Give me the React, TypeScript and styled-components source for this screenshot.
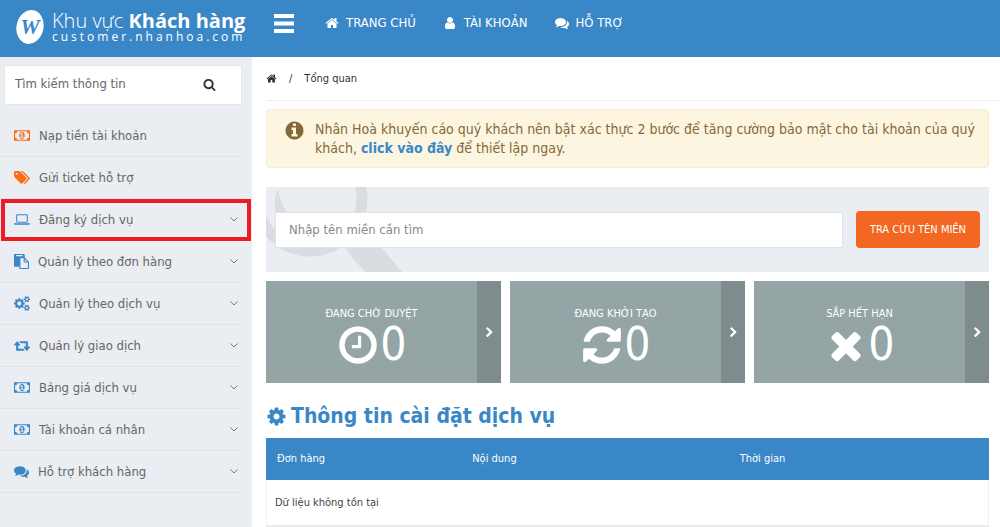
import React from 'react';
import styled, { createGlobalStyle, css } from 'styled-components';

const blue = '#3a87c8';
const orange = '#ff6a13';
const panel = '#eaedf1';

const GlobalStyle = createGlobalStyle`
  *, *::before, *::after { box-sizing: border-box; }
  body {
    margin: 0;
    background: #fff;
    color: #444;
    font-family: Tahoma, "DejaVu Sans Condensed", "Noto Sans", sans-serif;
    font-size: 13px;
    line-height: 20px;
  }
  a { color: inherit; text-decoration: none; }
  ul { list-style: none; margin: 0; padding: 0; }
  input, button { font: inherit; }
`;

/* Icon outlines on a 1792-unit grid */
const paths = {
  home: 'M1472 992v480q0 26-19 45t-45 19h-384v-384h-256v384h-384q-26 0-45-19t-19-45v-480q0-1 .5-3t.5-3l575-474 575 474q1 2 1 6zm223-69l-62 74q-8 9-21 11h-3q-13 0-21-7l-692-577-692 577q-12 8-24 7-13-2-21-11l-62-74q-8-10-7-23.5t11-21.5l719-599q32-26 76-26t76 26l244 204v-195q0-14 9-23t23-9h192q14 0 23 9t9 23v408l219 182q10 8 11 21.5t-7 23.5z',
  user: 'M1536 1399q0 109-62.5 187t-150.5 78h-854q-88 0-150.5-78t-62.5-187q0-85 8.5-160.5t31.5-152 58.5-131 94-89 134.5-34.5q131 128 313 128t313-128q76 0 134.5 34.5t94 89 58.5 131 31.5 152 8.5 160.5zm-256-887q0 159-112.5 271.5t-271.5 112.5-271.5-112.5-112.5-271.5 112.5-271.5 271.5-112.5 271.5 112.5 112.5 271.5z',
  comments: 'M1408 768q0 139-94 257t-256.5 186.5-353.5 68.5q-86 0-176-16-124 88-278 128-36 9-86 16h-3q-11 0-20.5-8t-11.5-21q-1-3-1-6.5t.5-6.5 2-6l2.5-5 3.5-5.5 4-5 4.5-5 4-4.5q5-6 23-25t26-29.5 22.5-29 25-38.5 20.5-44q-124-72-195-177t-71-224q0-139 94-257t256.5-186.5 353.5-68.5 353.5 68.5 256.5 186.5 94 257zm384 256q0 120-71 224.5t-195 176.5q10 24 20.5 44t25 38.5 22.5 29 26 29.5 23 25q1 1 4 4.5t4.5 5 4 5 3.5 5.5l2.5 5 2 6 .5 6.5-1 6.5q-3 14-13 22t-22 7q-50-7-86-16-154-40-278-128-90 16-176 16-271 0-472-132 58 4 88 4 161 0 309-45t264-129q125-92 192-212t67-254q0-77-23-152 129 71 204 178t75 230z',
  search: 'M1216 832q0-185-131.5-316.5t-316.5-131.5-316.5 131.5-131.5 316.5 131.5 316.5 316.5 131.5 316.5-131.5 131.5-316.5zm512 832q0 52-38 90t-90 38q-54 0-90-38l-343-342q-179 124-399 124-143 0-273.5-55.5t-225-150-150-225-55.5-273.5 55.5-273.5 150-225 225-150 273.5-55.5 273.5 55.5 225 150 150 225 55.5 273.5q0 220-124 399l343 343q37 37 37 90z',
  money: 'M768 1152h384v-96h-128v-448h-114l-148 137 77 80q42-37 55-57h2v288h-128v96zm512-256q0 70-21 142t-59.5 134-101.5 101-138 39-138-39-101.5-101-59.5-134-21-142 21-142 59.5-134 101.5-101 138-39 138 39 101.5 101 59.5 134 21 142zm512 256v-512q-106 0-181-75t-75-181h-1152q0 106-75 181t-181 75v512q106 0 181 75t75 181h1152q0-106 75-181t181-75zm128-832v1152q0 26-19 45t-45 19h-1792q-26 0-45-19t-19-45v-1152q0-26 19-45t45-19h1792q26 0 45 19t19 45z',
  tags: 'M448 448q0-53-37.5-90.5t-90.5-37.5-90.5 37.5-37.5 90.5 37.5 90.5 90.5 37.5 90.5-37.5 37.5-90.5zm1067 576q0 53-37 90l-491 492q-39 37-91 37-53 0-90-37l-715-716q-38-37-64.5-101t-26.5-117v-416q0-52 38-90t90-38h416q53 0 117 26.5t102 64.5l715 714q37 39 37 91zm384 0q0 53-37 90l-491 492q-39 37-91 37-36 0-59-14t-53-45l470-470q37-37 37-90 0-52-37-91l-715-714q-38-38-102-64.5t-117-26.5h224q53 0 117 26.5t102 64.5l715 714q37 39 37 91z',
  laptop: 'M416 1280q-66 0-113-47t-47-113v-704q0-66 47-113t113-47h1088q66 0 113 47t47 113v704q0 66-47 113t-113 47h-1088zm-32-864v704q0 13 9.5 22.5t22.5 9.5h1088q13 0 22.5-9.5t9.5-22.5v-704q0-13-9.5-22.5t-22.5-9.5h-1088q-13 0-22.5 9.5t-9.5 22.5zm1376 928h160v96q0 40-47 68t-113 28h-1600q-66 0-113-28t-47-68v-96h1760zm-720 96q16 0 16-16t-16-16h-160q-16 0-16 16t16 16h160z',
  paste: 'M768 1664h896v-640h-416q-40 0-68-28t-28-68v-416h-384v1152zm256-1440v-64q0-13-9.5-22.5t-22.5-9.5h-704q-13 0-22.5 9.5t-9.5 22.5v64q0 13 9.5 22.5t22.5 9.5h704q13 0 22.5-9.5t9.5-22.5zm256 672h299l-299-299v299zm512 128v672q0 40-28 68t-68 28h-960q-40 0-68-28t-28-68v-160h-544q-40 0-68-28t-28-68v-1344q0-40 28-68t68-28h1088q40 0 68 28t28 68v328q21 13 36 28l408 408q28 28 48 76t20 88z',
  cogs: 'M896 896q0-106-75-181t-181-75-181 75-75 181 75 181 181 75 181-75 75-181zm768 512q0-52-38-90t-90-38-90 38-38 90q0 53 37.5 90.5t90.5 37.5 90.5-37.5 37.5-90.5zm0-1024q0-52-38-90t-90-38-90 38-38 90q0 53 37.5 90.5t90.5 37.5 90.5-37.5 37.5-90.5zm-384 421v185q0 10-7 19.5t-16 10.5l-155 24q-11 35-32 76 34 48 90 115 7 11 7 20 0 12-7 19-23 30-82.5 89.5t-78.5 59.5q-11 0-21-7l-115-90q-37 19-77 31-11 108-23 155-7 24-30 24h-186q-11 0-20-7.5t-10-17.5l-23-153q-34-10-75-31l-118 89q-7 7-20 7-11 0-21-8-144-133-144-160 0-9 7-19 10-14 41-53t47-61q-23-44-35-82l-152-24q-10-1-17-9.5t-7-19.5v-185q0-10 7-19.5t16-10.5l155-24q11-35 32-76-34-48-90-115-7-11-7-20 0-12 7-20 22-30 82-89t79-59q11 0 21 7l115 90q34-18 77-32 11-108 23-154 7-24 30-24h186q11 0 20 7.5t10 17.5l23 153q34 10 75 31l118-89q8-7 20-7 11 0 21 8 144 133 144 160 0 8-7 19-12 16-42 54t-45 60q23 48 34 82l152 23q10 2 17 10.5t7 19.5zm640 533v140q0 16-149 31-12 27-30 52 51 113 51 138 0 4-4 7-122 71-124 71-8 0-46-47t-52-68q-20 2-30 2t-30-2q-14 21-52 68t-46 47q-2 0-124-71-4-3-4-7 0-25 51-138-18-25-30-52-149-15-149-31v-140q0-16 149-31 13-29 30-52-51-113-51-138 0-4 4-7 4-2 35-20t59-34 30-16q8 0 46 46.5t52 67.5q20-2 30-2t30 2q51-71 92-112l6-2q4 0 124 70 4 3 4 7 0 25-51 138 17 23 30 52 149 15 149 31zm0-1024v140q0 16-149 31-12 27-30 52 51 113 51 138 0 4-4 7-122 71-124 71-8 0-46-47t-52-68q-20 2-30 2t-30-2q-14 21-52 68t-46 47q-2 0-124-71-4-3-4-7 0-25 51-138-18-25-30-52-149-15-149-31v-140q0-16 149-31 13-29 30-52-51-113-51-138 0-4 4-7 4-2 35-20t59-34 30-16q8 0 46 46.5t52 67.5q20-2 30-2t30 2q51-71 92-112l6-2q4 0 124 70 4 3 4 7 0 25-51 138 17 23 30 52 149 15 149 31z',
  retweet: 'M1280 1504q0 13-9.5 22.5t-22.5 9.5h-960q-8 0-13.5-2t-9-7-5.5-8-3-11.5-1-11.5v-600h-192q-26 0-45-19t-19-45q0-24 15-41l320-384q19-22 49-22t49 22l320 384q15 17 15 41 0 26-19 45t-45 19h-192v384h576q16 0 25 11l160 192q7 10 7 21zm640-416q0 24-15 41l-320 384q-20 23-49 23t-49-23l-320-384q-15-17-15-41 0-26 19-45t45-19h192v-384h-576q-16 0-25-12l-160-192q-7-9-7-20 0-13 9.5-22.5t22.5-9.5h960q8 0 13.5 2t9 7 5.5 8 3 11.5 1 11.5v600h192q26 0 45 19t19 45z',
  info: 'M1152 1376v-160q0-14-9-23t-23-9h-96v-512q0-14-9-23t-23-9h-320q-14 0-23 9t-9 23v160q0 14 9 23t23 9h96v320h-96q-14 0-23 9t-9 23v160q0 14 9 23t23 9h448q14 0 23-9t9-23zm-128-896v-160q0-14-9-23t-23-9h-192q-14 0-23 9t-9 23v160q0 14 9 23t23 9h192q14 0 23-9t9-23zm640 416q0 209-103 385.5t-279.5 279.5-385.5 103-385.5-103-279.5-279.5-103-385.5 103-385.5 279.5-279.5 385.5-103 385.5 103 279.5 279.5 103 385.5z',
  clock: 'M1024 544v448q0 14-9 23t-23 9h-320q-14 0-23-9t-9-23v-64q0-14 9-23t23-9h224v-352q0-14 9-23t23-9h64q14 0 23 9t9 23zm416 352q0-148-73-273t-198-198-273-73-273 73-198 198-73 273 73 273 198 198 273 73 273-73 198-198 73-273zm224 0q0 209-103 385.5t-279.5 279.5-385.5 103-385.5-103-279.5-279.5-103-385.5 103-385.5 279.5-279.5 385.5-103 385.5 103 279.5 279.5 103 385.5z',
  refresh: 'M1639 1056q0 5-1 7-64 268-268 434.5t-478 166.5q-146 0-282.5-55t-243.5-157l-129 129q-19 19-45 19t-45-19-19-45v-448q0-26 19-45t45-19h448q26 0 45 19t19 45-19 45l-137 137q71 66 161 102t187 36q134 0 250-65t186-179q11-17 53-117 8-23 30-23h192q13 0 22.5 9.5t9.5 22.5zm25-800v448q0 26-19 45t-45 19h-448q-26 0-45-19t-19-45 19-45l138-138q-148-137-349-137-134 0-250 65t-186 179q-11 17-53 117-8 23-30 23h-199q-13 0-22.5-9.5t-9.5-22.5v-7q65-268 270-434.5t480-166.5q146 0 284 55.5t245 156.5l130-129q19-19 45-19t45 19 19 45z',
  times: 'M1490 1322q0 40-28 68l-136 136q-28 28-68 28t-68-28l-294-294-294 294q-28 28-68 28t-68-28l-136-136q-28-28-28-68t28-68l294-294-294-294q-28-28-28-68t28-68l136-136q28-28 68-28t68 28l294 294 294-294q28-28 68-28t68 28l136 136q28 28 28 68t-28 68l-294 294 294 294q28 28 28 68z',
  cog: 'M1152 896q0-106-75-181t-181-75-181 75-75 181 75 181 181 75 181-75 75-181zm512-109v222q0 12-8 23t-20 13l-185 28q-19 54-39 91 35 50 107 138 10 12 10 25t-9 23q-27 37-99 108t-94 71q-12 0-26-9l-138-108q-44 23-91 38-16 136-29 186-7 28-36 28h-222q-14 0-24.5-8.5t-11.5-21.5l-28-184q-49-16-90-37l-141 107q-10 9-25 9-14 0-25-11-126-114-165-168-7-10-7-23 0-12 8-23 15-21 51-66.5t54-70.5q-27-50-41-99l-183-27q-13-2-21-12.5t-8-23.5v-222q0-12 8-23t19-13l186-28q14-46 39-92-40-57-107-138-10-12-10-24 0-10 9-23 26-36 98.5-107.5t94.5-71.5q13 0 26 10l138 107q44-23 91-38 16-136 29-186 7-28 36-28h222q14 0 24.5 8.5t11.5 21.5l28 184q49 16 90 37l142-107q9-9 24-9 13 0 25 10 129 119 165 170 7 8 7 22 0 12-8 23-15 21-51 66.5t-54 70.5q26 50 41 98l183 28q13 2 21 12.5t8 23.5z',
  chevron: 'M1363 877l-742 742q-19 19-45 19t-45-19l-166-166q-19-19-19-45t19-45l531-531-531-531q-19-19-19-45t19-45l166-166q19-19 45-19t45 19l742 742q19 19 19 45t-19 45z',
};
type IconName = keyof typeof paths;

const Svg = styled.svg`
  display: block;
  flex: none;
  fill: currentColor;
`;

function Icon({ name, size, wide = false }: { name: IconName; size: number; wide?: boolean }) {
  return (
    <Svg
      height={size}
      width={wide ? Math.round((size * 15) / 14) : size}
      viewBox={wide ? '0 0 1920 1792' : '0 0 1792 1792'}
      aria-hidden="true"
    >
      <path d={paths[name]} />
    </Svg>
  );
}

const Header = styled.header`
  display: flex;
  align-items: flex-start;
  height: 57px;
  background: ${blue};
  color: #fff;
`;

const Brand = styled.a`
  display: flex;
  flex: none;
  gap: 7px;
  width: 252px;
  padding: 10px 0 0 16px;
`;

const BrandText = styled.span`
  display: flex;
  flex-direction: column;
  font-family: "Open Sans", sans-serif;
  white-space: nowrap;
`;

const BrandName = styled.span`
  font-size: 20px;
  line-height: 22px;
  font-weight: 300;
  b { font-weight: 700; }
`;

const BrandHost = styled.span`
  font-size: 12px;
  line-height: 10px;
  letter-spacing: 3px;
`;

const MenuButton = styled.button`
  display: flex;
  flex: none;
  margin: 14px 0 0 22px;
  padding: 0;
  border: 0;
  background: none;
  color: inherit;
`;

const TopNav = styled.nav`
  display: flex;
  gap: 27px;
  margin: 13px 0 0 31px;
  font-size: 13px;
`;

const TopLink = styled.a`
  display: flex;
  align-items: center;
  gap: 7px;
`;

const Body = styled.div`
  display: flex;
  align-items: stretch;
  min-height: calc(100vh - 57px);
`;

const Sidebar = styled.aside`
  flex: none;
  width: 252px;
  background: ${panel};
`;

const SideSearch = styled.form`
  display: flex;
  align-items: center;
  height: 40px;
  margin: 8px 10px 10px 4px;
  padding: 0 25px 2px 10px;
  background: #fff;
  border: 1px solid #e3e6ea;
  input {
    flex: 1;
    min-width: 0;
    padding: 0;
    border: 0;
    outline: 0;
    background: none;
    color: #555;
    &::placeholder { color: #666; opacity: 1; }
  }
  button {
    padding: 0;
    border: 0;
    background: none;
    color: #333;
  }
`;

const SideItem = styled.li<{ $marked?: boolean }>`
  position: relative;
  margin-right: 10px;
  border-bottom: 1px solid #dfe4e8;
  ${p => p.$marked && css`
    &::after {
      content: '';
      position: absolute;
      inset: 0 -9px -1px 1px;
      border: 4px solid #ec1c24;
      pointer-events: none;
    }
  `}
`;

const SideLink = styled.a<{ $accent?: boolean }>`
  display: flex;
  align-items: center;
  gap: 9px;
  height: 41px;
  padding: 0 4px 0 14px;
  color: #666;
  font-size: 13px;
  svg:first-child { color: ${p => (p.$accent ? orange : blue)}; }
  span { flex: 1; }
`;

const Main = styled.main`
  flex: 1;
  min-width: 0;
  padding-left: 14px;
`;

const Crumbs = styled.nav`
  display: flex;
  align-items: center;
  gap: 12px;
  height: 44px;
  border-bottom: 1px solid #eee;
  font-size: 11px;
  color: #333;
`;

const Content = styled.div`
  padding: 8px 11px 0 0;
`;

const Notice = styled.div`
  display: flex;
  gap: 10px;
  padding: 10px 8px 9px 17px;
  border: 1px solid #f8ecc9;
  border-radius: 4px;
  background: #fcf6e0;
  color: #85683a;
  font-size: 14px;
  line-height: 19px;
  p { margin: 0; }
  a { color: ${blue}; font-weight: 700; }
`;

const DomainSearch = styled.form`
  position: relative;
  display: flex;
  align-items: center;
  gap: 13px;
  height: 85px;
  margin-top: 19px;
  padding: 0 9px;
  background: ${panel};
  overflow: hidden;
`;

const Backdrop = styled.svg`
  position: absolute;
  left: 0;
  top: 0;
`;

const DomainInput = styled.input`
  position: relative;
  flex: 1;
  min-width: 0;
  height: 36px;
  padding: 0 13px;
  border: 1px solid #dfe3e7;
  background: #fff;
  font-size: 13px;
  &::placeholder { color: #888; opacity: 1; }
`;

const DomainButton = styled.button`
  position: relative;
  height: 37px;
  padding: 0 14px;
  border: 0;
  border-radius: 4px;
  background: #f26722;
  color: #fff;
  font-size: 11px;
`;

const Stats = styled.div`
  display: grid;
  grid-template-columns: repeat(3, 1fr);
  gap: 9px;
  margin-top: 9px;
`;

const StatCard = styled.a`
  display: flex;
  height: 102px;
  background: #95a5a5;
  color: #fff;
`;

const StatBody = styled.span`
  display: flex;
  flex: 1;
  flex-direction: column;
  align-items: center;
  padding-top: 25px;
  font-size: 11px;
  line-height: 16px;
`;

const StatValue = styled.span`
  display: flex;
  align-items: center;
  font-size: 46px;
  line-height: 45px;
`;

const StatArrow = styled.span`
  display: flex;
  align-items: center;
  justify-content: center;
  width: 24px;
  background: #7e8c8d;
`;

const Heading = styled.h1`
  display: flex;
  align-items: center;
  gap: 4px;
  margin: 18px 0 7px;
  color: ${blue};
  font-size: 21px;
  line-height: 30px;
  font-weight: 700;
`;

const Table = styled.table`
  width: 100%;
  border-collapse: collapse;
  table-layout: fixed;
  font-size: 11px;
  th {
    height: 42px;
    padding: 0 11px;
    background: ${blue};
    color: #fff;
    font-weight: 400;
    text-align: left;
  }
  td {
    height: 46px;
    padding: 0 9px;
    border-bottom: 2px solid #e8ebef;
    box-shadow: inset 1px 0 #f0f2f4, inset -1px 0 #f0f2f4;
  }
`;

const OrderCol = styled.col`
  width: 27%;
`;

const ContentCol = styled.col`
  width: 37%;
`;

const topLinks: { icon: IconName; label: string }[] = [
  { icon: 'home', label: 'TRANG CHỦ' },
  { icon: 'user', label: 'TÀI KHOẢN' },
  { icon: 'comments', label: 'HỖ TRỢ' },
];

const sideLinks: { icon: IconName; label: string; wide?: boolean; accent?: boolean; marked?: boolean }[] = [
  { icon: 'money', label: 'Nạp tiền tài khoản', wide: true, accent: true },
  { icon: 'tags', label: 'Gửi ticket hỗ trợ', wide: true, accent: true },
  { icon: 'laptop', label: 'Đăng ký dịch vụ', wide: true, marked: true },
  { icon: 'paste', label: 'Quản lý theo đơn hàng' },
  { icon: 'cogs', label: 'Quản lý theo dịch vụ', wide: true },
  { icon: 'retweet', label: 'Quản lý giao dịch', wide: true },
  { icon: 'money', label: 'Bảng giá dịch vụ', wide: true },
  { icon: 'money', label: 'Tài khoản cá nhân', wide: true },
  { icon: 'comments', label: 'Hỗ trợ khách hàng' },
];

const stats: { icon: IconName; label: string; value: number }[] = [
  { icon: 'clock', label: 'ĐANG CHỜ DUYỆT', value: 0 },
  { icon: 'refresh', label: 'ĐANG KHỞI TẠO', value: 0 },
  { icon: 'times', label: 'SẮP HẾT HẠN', value: 0 },
];

export default function App() {
  return (
    <>
      <GlobalStyle />
      <Header>
        <Brand href="#">
          <Svg width="29" height="36" viewBox="0 0 29 36" aria-hidden="true">
            <ellipse cx="14" cy="17" rx="13.5" ry="17" transform="rotate(12 14 17)" />
            <text x="14" y="24" textAnchor="middle" fill={blue} fontFamily="Liberation Serif" fontStyle="italic" fontWeight="700" fontSize="22">W</text>
          </Svg>
          <BrandText>
            <BrandName>Khu vực <b>Khách hàng</b></BrandName>
            <BrandHost>customer.nhanhoa.com</BrandHost>
          </BrandText>
        </Brand>
        <MenuButton type="button" aria-label="Menu">
          <Svg width="20" height="19" viewBox="0 0 20 19">
            <path d="M0 0h20v4H0zM0 7.500h20v4H0zM0 15h20v4H0z" />
          </Svg>
        </MenuButton>
        <TopNav>
          {topLinks.map(l => (
            <TopLink href="#" key={l.label}>
              <Icon name={l.icon} size={14} />
              {l.label}
            </TopLink>
          ))}
        </TopNav>
      </Header>
      <Body>
        <Sidebar>
          <SideSearch>
            <input type="text" aria-label="Tìm kiếm thông tin" placeholder="Tìm kiếm thông tin" />
            <button type="submit" aria-label="Tìm kiếm"><Icon name="search" size={13} /></button>
          </SideSearch>
          <ul>
            {sideLinks.map(l => (
              <SideItem key={l.label} $marked={l.marked}>
                <SideLink href="#" $accent={l.accent}>
                  <Icon name={l.icon} size={15} wide={l.wide} />
                  <span>{l.label}</span>
                  {!l.accent && (
                    <svg width="8" height="5" viewBox="0 0 8 5" fill="none" stroke="#777" aria-hidden="true">
                      <path d="M.5 .5 4 4 7.500 .5" />
                    </svg>
                  )}
                </SideLink>
              </SideItem>
            ))}
          </ul>
        </Sidebar>
        <Main>
          <Crumbs aria-label="Breadcrumb">
            <a href="#" aria-label="Trang chủ"><Icon name="home" size={11} /></a>
            <span>/</span>
            <span>Tổng quan</span>
          </Crumbs>
          <Content>
            <Notice>
              <Icon name="info" size={21} />
              <p>
                Nhân Hoà khuyến cáo quý khách nên bật xác thực 2 bước để tăng cường bảo mật cho tài khoản của quý
                khách, <a href="#">click vào đây</a> để thiết lập ngay.
              </p>
            </Notice>
            <DomainSearch>
              <Backdrop width="140" height="86" viewBox="0 0 140 86" fill="#d9dde1" aria-hidden="true">
                <circle cx="44" cy="12" r="52" fill="none" stroke="#d9dde1" strokeWidth="11" />
                <path d="M12 2c-4 9-4 17-2 24h11c-5-8-8-16-9-24z" />
                <path d="M78 59h36l23 27h-36L86 71q-2-5-8-12z" />
              </Backdrop>
              <DomainInput type="text" aria-label="Tên miền" placeholder="Nhập tên miền cần tìm" />
              <DomainButton type="submit">TRA CỨU TÊN MIỀN</DomainButton>
            </DomainSearch>
            <Stats>
              {stats.map(s => (
                <StatCard href="#" key={s.label}>
                  <StatBody>
                    {s.label}
                    <StatValue>
                      <Icon name={s.icon} size={44} />
                      {s.value}
                    </StatValue>
                  </StatBody>
                  <StatArrow><Icon name="chevron" size={11} /></StatArrow>
                </StatCard>
              ))}
            </Stats>
            <Heading><Icon name="cog" size={21} />Thông tin cài đặt dịch vụ</Heading>
            <Table>
              <colgroup>
                <OrderCol />
                <ContentCol />
                <col />
              </colgroup>
              <thead>
                <tr><th scope="col">Đơn hàng</th><th scope="col">Nội dung</th><th scope="col">Thời gian</th></tr>
              </thead>
              <tbody>
                <tr><td colSpan={3}>Dữ liệu không tồn tại</td></tr>
              </tbody>
            </Table>
          </Content>
        </Main>
      </Body>
    </>
  );
}
